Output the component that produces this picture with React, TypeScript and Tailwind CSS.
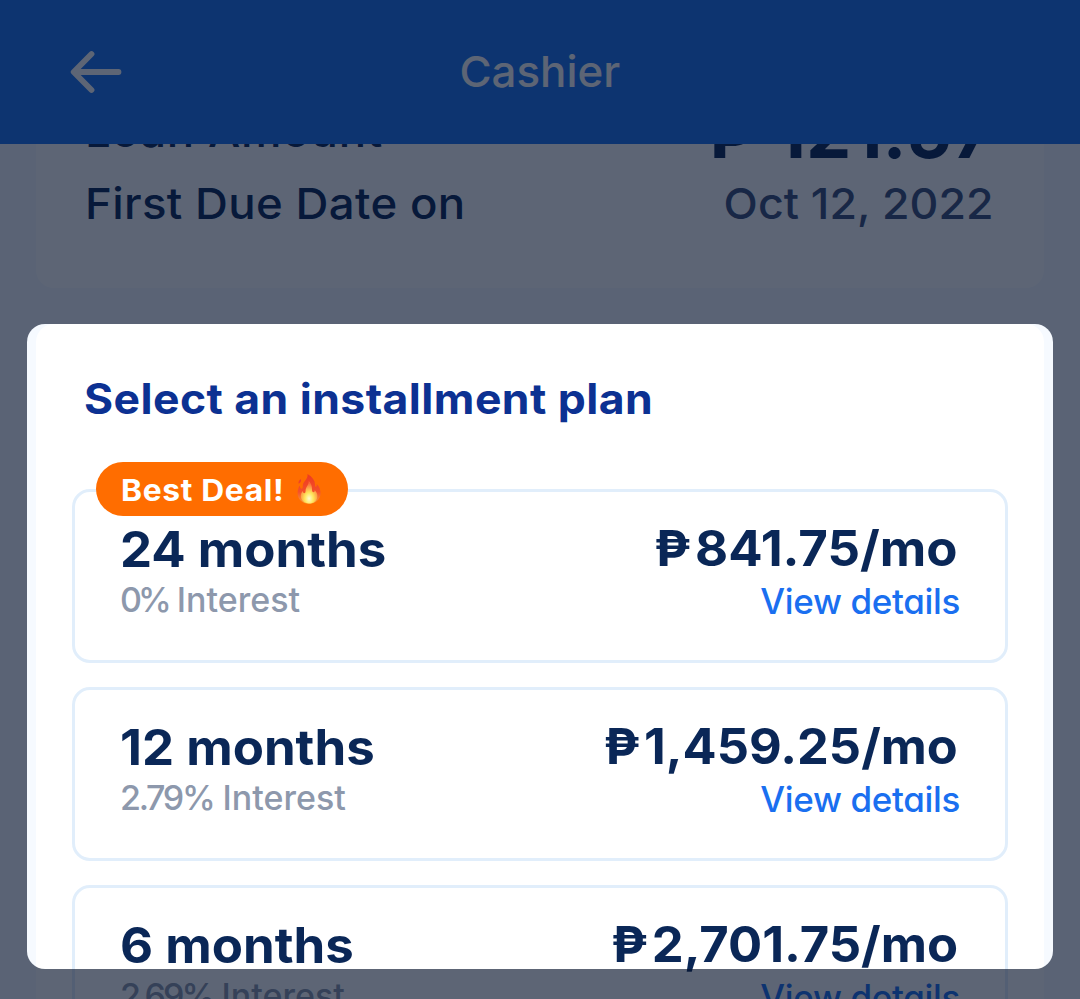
type Plan = {
  term: string;
  rate: string;
  rateClass: string;
  price: string;
  priceClass: string;
  best?: boolean;
};

const plans: Plan[] = [
  { term: "24 months", rate: "0%", rateClass: "tracking-[-4px]", price: "841.75/mo", priceClass: "scale-x-[1.04]", best: true },
  { term: "12 months", rate: "2.79%", rateClass: "tracking-[-2.3px]", price: "1,459.25/mo", priceClass: "scale-x-[1.03]" },
  { term: "6 months", rate: "2.69%", rateClass: "tracking-[-2.9px]", price: "2,701.75/mo", priceClass: "scale-x-[1.035]" },
];

function Flame() {
  return (
    <svg width="24" height="30" viewBox="0 0 24 30" aria-hidden="true">
      <defs>
        <linearGradient id="outer" x1="0" y1="0" x2="0" y2="1">
          <stop offset="0" stopColor="#ee3a20" />
          <stop offset="0.6" stopColor="#f4502a" />
          <stop offset="1" stopColor="#f9a136" />
        </linearGradient>
        <radialGradient id="inner" cx="0.5" cy="0.78" r="0.75">
          <stop offset="0" stopColor="#fffbd0" />
          <stop offset="0.35" stopColor="#ffe45a" />
          <stop offset="0.9" stopColor="#fa6a38" />
        </radialGradient>
      </defs>
      <path fill="url(#outer)" d="M10.500 0C15.500 3 18 6.500 18 10.500c0 1.500.2 2.300.9 2.300.8 0 1-1.100.7-2.800C22.500 12.500 23.500 15.800 23.500 19.500 23.500 25.500 18.500 29.700 12 29.700S.6 25.500.6 19.500C.6 16 1.500 13.500 2.800 11.500c.2 2 .8 3.300 1.700 3.300 1.100 0 1.300-1.200 1.300-3.300C5.800 7.500 11.300 5.500 10.500 0Z" />
      <path fill="#ee4228" d="M3.500 5C4.800 6.500 4 8.200 1.800 9.800 1 8.300 1.800 6.500 3.500 5Z" />
      <path fill="url(#inner)" d="M11.800 7C14.400 9.500 15 12.500 15 15.500c0 1.800.5 2.700 1.500 2.700.9 0 1.300-.8 1.200-2 1.700 1.500 2.700 3.400 2.700 5.700 0 4.600-3.700 7.600-8.400 7.600s-8.200-3-8.200-7.400c0-2.200.9-3.900 2-5 .2 1.500.7 2.200 1.500 2.200 1 0 1.300-1.200 1.300-3 0-3 3.200-5.300 3.200-9.300Z" />
    </svg>
  );
}

function PlanCard({ plan }: { plan: Plan }) {
  return (
    <div className="relative flex h-[174px] shrink-0 justify-between rounded-[18px] border-[3px] border-[#e1eefb] px-[45px] pt-[33px]">
      {plan.best && (
        <div className="absolute -top-[30px] left-[21px] flex h-[54px] w-[252px] items-center rounded-full bg-[#ff6d00] pl-[25px]">
          <span className="mt-px w-[176px] origin-left scale-x-[1.06] text-[30px] leading-[54px] font-bold tracking-[0.6px] text-white">Best Deal!</span>
          <Flame />
        </div>
      )}
      <div className="flex flex-col items-start">
        <span className="origin-left scale-x-[1.04] text-[49px] leading-[50px] font-bold text-[#0a2757]">{plan.term}</span>
        <span className="text-[34px] leading-[50px] font-medium text-[#8d98ac]">
          <span className={plan.rateClass}>{plan.rate}</span>
          <span> Interest</span>
        </span>
      </div>
      <div className="-mt-px flex flex-col items-end">
        <span className={`mr-0.5 origin-right text-[49px] leading-[50px] font-bold text-[#0a2757] ${plan.priceClass}`}>
          <span className="mr-1">₱</span>
          {plan.price}
        </span>
        <span className="mt-0.5 text-[35px] leading-[50px] font-medium tracking-[-0.35px] text-[#1a6ff0] [font-feature-settings:'cv11']">View details</span>
      </div>
    </div>
  );
}

export default function App() {
  return (
    <div className="relative flex h-[999px] w-[1080px] flex-col overflow-hidden bg-[#f6faff] font-['Inter','Noto_Sans',sans-serif] whitespace-nowrap">
      <header className="grid h-36 shrink-0 grid-cols-[1fr_auto_1fr] items-center bg-[#1a73f0] text-white">
        <svg className="ml-[69px]" width="54" height="44" viewBox="0 0 54 44" fill="none" stroke="currentColor" strokeWidth="5.800" strokeLinecap="round" strokeLinejoin="round" aria-label="Back">
          <path d="M22.500 4 4.700 22l17.800 18M7 22h42.500" />
        </svg>
        <h1 className="-mt-0.5 scale-x-[1.02] text-[43px] leading-[60px] font-medium">Cashier</h1>
      </header>

      <main className="flex min-h-0 grow flex-col overflow-hidden px-9">
        <section className="flex h-36 shrink-0 flex-col justify-end rounded-b-[18px] bg-white px-[50px] pb-[55px] text-[43px] leading-[60px] font-medium text-[#0a2757]">
          <div className="flex h-[60px] justify-between">
            <span className="-ml-px origin-left scale-x-[1.06] tracking-[0.7px]">Loan Amount</span>
            <span className="mt-px text-[72px] font-bold">₱ 121.57</span>
          </div>
          <div className="mt-3 flex justify-between">
            <span className="-ml-px origin-left scale-x-[1.06] tracking-[0.3px]">First Due Date on</span>
            <span className="origin-right scale-x-[1.04] text-[#3b4f78]">Oct 12, 2022</span>
          </div>
        </section>

        <section className="mt-9 flex h-[800px] shrink-0 flex-col rounded-[18px] bg-white px-9 pt-[45px]">
          <h2 className="ml-3 origin-left scale-x-[1.06] text-[42px] leading-[60px] font-bold tracking-[0.4px] text-[#0c3192]">Select an installment plan</h2>
          <div className="mt-[60px] flex flex-col gap-6">
            {plans.map((plan) => (
              <PlanCard key={plan.term} plan={plan} />
            ))}
          </div>
        </section>
      </main>

      <div className="pointer-events-none absolute top-[324px] left-[27px] h-[645px] w-[1026px] rounded-[18px] shadow-[0_0_0_1200px_rgba(6,19,43,0.65)]" />
    </div>
  );
}
